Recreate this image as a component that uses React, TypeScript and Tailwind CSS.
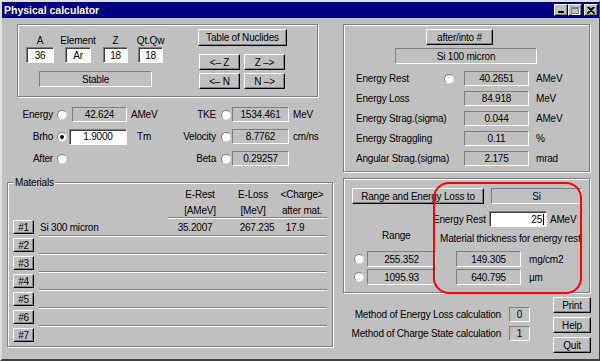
import React from 'react';

const raised =
  'flex items-center justify-center bg-[#c0c0c0] border border-t-white border-l-white border-r-black border-b-black shadow-[inset_-1px_-1px_0_#808080]';
const sunken =
  'flex items-center justify-center border border-t-[#808080] border-l-[#808080] border-r-white border-b-white';
const edit =
  'flex items-center bg-white border border-t-[#808080] border-l-[#808080] border-r-white border-b-white shadow-[inset_1px_1px_0_#404040]';
const etched = 'border border-[#808080] shadow-[inset_1px_1px_0_#fff,1px_1px_0_#fff]';

function Radio({ checked = false }: { checked?: boolean }) {
  return (
    <span className="flex w-[10px] h-[10px] shrink-0 items-center justify-center rounded-full bg-white border border-t-[#808080] border-l-[#808080] border-r-[#dfdfdf] border-b-[#dfdfdf]">
      {checked && <span className="w-[4px] h-[4px] rounded-full bg-black" />}
    </span>
  );
}

function Material({ n, last, name, rest, loss, charge }: { n: number; last?: boolean; name?: string; rest?: string; loss?: string; charge?: string }) {
  return (
    <div className="flex h-[18px]">
      <div className={`${raised} ml-[5px] w-[21px] h-[14px] shrink-0`}>#{n}</div>
      <div
        className={
          last
            ? 'ml-[5px] w-[288px] h-[16px] flex items-center'
            : 'ml-[5px] w-[288px] h-[16px] flex items-center border-b border-[#808080] shadow-[0_1px_0_#fff]'
        }
      >
        <span className="w-[136px] pl-[1px]">{name}</span>
        <span className="w-[40px] text-center">{rest}</span>
        <span className="ml-[22px] w-[40px] text-center">{loss}</span>
        <span className="w-[36px] text-center">{charge}</span>
      </div>
    </div>
  );
}

function ResultRow({ label, value, unit, radio }: { label: string; value: string; unit: string; radio?: boolean }) {
  return (
    <div className="flex items-center h-[15px]">
      <span className="ml-[12px] w-[88px] whitespace-nowrap">{label}</span>
      <span className="w-[10px]">{radio && <Radio />}</span>
      <div className={`${sunken} ml-[10px] w-[65px] h-[15px]`}>{value}</div>
      <span className="ml-[7px]">{unit}</span>
    </div>
  );
}

export default function App() {
  return (
    <div className="w-[600px] h-[361px] bg-[#c0c0c0] flex flex-col text-black text-[10px] tracking-[-0.2px] leading-[13px] font-['Liberation_Sans',Arial,sans-serif] border-t-2 border-l-2 border-r border-b-2 border-t-[#dfdfdf] border-l-[#dfdfdf] border-r-[#404040] border-b-[#404040] overflow-hidden">
      {/* title bar */}
      <div className="h-[16px] shrink-0 bg-[#000080] flex items-center justify-between pl-[2px] pr-[1px]">
        <span className="text-white font-bold text-[10.5px] tracking-[0px]">Physical calculator</span>
        <div className="flex items-center">
          <div className={`${raised} w-[14px] h-[12px] items-end justify-start pl-[3px] pb-[2px]`}>
            <span className="w-[6px] h-[2px] bg-black" />
          </div>
          <div className={`${raised} w-[14px] h-[12px]`}>
            <span className="w-[8px] h-[7px] border border-[#808080] border-t-2 shadow-[1px_1px_0_#fff]" />
          </div>
          <div className={`${raised} ml-[2px] w-[14px] h-[12px]`}>
            <svg width="8" height="7" viewBox="0 0 8 7">
              <path d="M0.5 0 L7.5 7 M7.5 0 L0.5 7 M1.5 0 L8 6.5 M6.5 0 L0 6.5" stroke="#000" strokeWidth="1.2" />
            </svg>
          </div>
        </div>
      </div>

      <div className="flex flex-1">
        {/* left column */}
        <div className="w-[336px] shrink-0 flex flex-col">
          <div className={`${etched} mt-[6px] ml-[15px] w-[301px] h-[73px] flex`}>
            <div className="w-[180px] pl-[8px] pt-[9px] flex flex-col">
              <div className="flex">
                <div className="w-[28px] flex flex-col items-center">
                  <span className="whitespace-nowrap">A</span>
                  <div className={`${edit} w-[28px] h-[16px] justify-center`}>36</div>
                </div>
                <div className="ml-[11px] w-[26px] flex flex-col items-center">
                  <span className="whitespace-nowrap">Element</span>
                  <div className={`${edit} w-[26px] h-[16px] justify-center`}>Ar</div>
                </div>
                <div className="ml-[12px] w-[25px] flex flex-col items-center">
                  <span className="whitespace-nowrap">Z</span>
                  <div className={`${edit} w-[25px] h-[16px] justify-center`}>18</div>
                </div>
                <div className="ml-[10px] w-[25px] flex flex-col items-center">
                  <span className="whitespace-nowrap">Qt.Qw</span>
                  <div className={`${edit} w-[25px] h-[16px] justify-center`}>18</div>
                </div>
              </div>
              <div className={`${sunken} mt-[8px] ml-[13px] w-[113px] h-[16px]`}>Stable</div>
            </div>
            <div className="pt-[4px] flex flex-col">
              <div className={`${raised} w-[89px] h-[17px]`}>Table of Nuclides</div>
              <div className="mt-[8px] ml-[1px] flex gap-[4px]">
                <div className={`${raised} w-[41px] h-[16px]`}>&lt;– Z</div>
                <div className={`${raised} w-[41px] h-[16px]`}>Z –&gt;</div>
              </div>
              <div className="mt-[3px] ml-[1px] flex gap-[4px]">
                <div className={`${raised} w-[41px] h-[16px]`}>&lt;– N</div>
                <div className={`${raised} w-[41px] h-[16px]`}>N –&gt;</div>
              </div>
            </div>
          </div>

          {/* energy rows */}
          <div className="h-[85px] pt-[10px] flex flex-col gap-[7px]">
            <div className="flex items-center h-[15px]">
              <div className="w-[178px] flex items-center">
                <span className="w-[51px] text-right">Energy</span>
                <span className="ml-[4px]"><Radio /></span>
                <div className={`${sunken} ml-[5px] w-[55px] h-[15px]`}>42.624</div>
                <span className="ml-[4px]">AMeV</span>
              </div>
              <span className="w-[36px] text-right">TKE</span>
              <span className="ml-[5px]"><Radio /></span>
              <div className={`${sunken} ml-[1px] w-[57px] h-[15px]`}>1534.461</div>
              <span className="ml-[4px]">MeV</span>
            </div>
            <div className="flex items-center h-[15px]">
              <div className="w-[178px] flex items-center">
                <span className="w-[51px] text-right">Brho</span>
                <span className="ml-[4px]"><Radio checked /></span>
                <div className={`${edit} ml-[2px] w-[58px] h-[16px] justify-center`}>1.9000</div>
                <span className="ml-[10px]">Tm</span>
              </div>
              <span className="w-[36px] text-right">Velocity</span>
              <span className="ml-[5px]"><Radio /></span>
              <div className={`${sunken} ml-[1px] w-[57px] h-[15px]`}>8.7762</div>
              <span className="ml-[4px]">cm/ns</span>
            </div>
            <div className="flex items-center h-[15px]">
              <div className="w-[178px] flex items-center">
                <span className="w-[51px] text-right">After</span>
                <span className="ml-[4px]"><Radio /></span>
              </div>
              <span className="w-[36px] text-right">Beta</span>
              <span className="ml-[5px]"><Radio /></span>
              <div className={`${sunken} ml-[1px] w-[57px] h-[15px]`}>0.29257</div>
            </div>
          </div>

          {/* materials */}
          <div className={`${etched} relative ml-[5px] w-[326px] h-[165px] flex flex-col`}>
            <span className="absolute -top-[7px] left-[6px] bg-[#c0c0c0] px-[1px]">Materials</span>
            <div className="pt-[5px] ml-[168px] flex">
              <div className="w-[48px] flex flex-col items-center">
                <span>E-Rest</span>
                <span className="mt-[3px]">[AMeV]</span>
              </div>
              <div className="ml-[5px] w-[48px] flex flex-col items-center">
                <span>E-Loss</span>
                <span className="mt-[3px]">[MeV]</span>
              </div>
              <div className="w-[50px] flex flex-col items-center">
                <span>&lt;Charge&gt;</span>
                <span className="mt-[3px]">after mat.</span>
              </div>
            </div>
            <div className="ml-[160px] w-[159px] border-t border-[#808080] shadow-[0_1px_0_#fff]" />
            <div className="mt-[2px] flex flex-col">
              <Material n={1} name="Si 300 micron" rest="35.2007" loss="267.235" charge="17.9" />
              <Material n={2} />
              <Material n={3} />
              <Material n={4} />
              <Material n={5} />
              <Material n={6} />
              <Material n={7} last />
            </div>
          </div>
        </div>

        {/* right column */}
        <div className="pl-[5px] flex flex-col">
          <div className={`${etched} mt-[6px] w-[247px] h-[148px] flex flex-col`}>
            <div className={`${raised} mt-[4px] ml-[82px] w-[67px] h-[16px]`}>after/into #</div>
            <div className={`${sunken} mt-[3px] ml-[51px] w-[142px] h-[16px]`}>Si 100 micron</div>
            <div className="mt-[7px] flex flex-col gap-[5px]">
              <ResultRow label="Energy Rest" value="40.2651" unit="AMeV" radio />
              <ResultRow label="Energy Loss" value="84.918" unit="MeV" />
              <ResultRow label="Energy Strag.(sigma)" value="0.044" unit="AMeV" />
              <ResultRow label="Energy Straggling" value="0.11" unit="%" />
              <ResultRow label="Angular Strag.(sigma)" value="2.175" unit="mrad" />
            </div>
          </div>

          <div className={`${etched} relative mt-[6px] w-[247px] h-[115px] flex flex-col`}>
            <div className="mt-[9px] flex">
              <div className={`${raised} ml-[8px] w-[132px] h-[16px]`}>Range and Energy Loss to</div>
              <div className={`${sunken} ml-[7px] w-[91px] h-[16px]`}>Si</div>
            </div>
            <div className="mt-[7px] flex items-center h-[16px]">
              <span className="ml-[89px] w-[56px] whitespace-nowrap">Energy Rest</span>
              <div className={`${edit} w-[58px] h-[16px] justify-end pr-[2px]`}>
                25<span className="ml-[1px] w-[1px] h-[11px] bg-black" />
              </div>
              <span className="ml-[3px]">AMeV</span>
            </div>
            <div className="mt-[2px] flex items-start h-[16px]">
              <span className="ml-[38px] w-[58px]">Range</span>
              <span className="mt-[3px] whitespace-nowrap">Material thickness for energy rest</span>
            </div>
            <div className="mt-[6px] flex items-center h-[16px]">
              <span className="ml-[10px]"><Radio /></span>
              <div className={`${sunken} ml-[3px] w-[69px] h-[16px]`}>255.352</div>
              <div className={`${sunken} ml-[20px] w-[65px] h-[16px]`}>149.305</div>
              <span className="ml-[8px]">mg/cm2</span>
            </div>
            <div className="mt-[2px] flex items-center h-[16px]">
              <span className="ml-[10px]"><Radio /></span>
              <div className={`${sunken} ml-[3px] w-[69px] h-[16px]`}>1095.93</div>
              <div className={`${sunken} ml-[20px] w-[65px] h-[16px]`}>640.795</div>
              <span className="ml-[8px]">µm</span>
            </div>
            <div className="absolute left-[89px] top-[3px] w-[149px] h-[112px] border-2 border-[#ff0000] rounded-[16px] pointer-events-none" />
          </div>

          <div className="flex">
            <div className="w-[187px] pt-[14px] flex flex-col items-end gap-[4px]">
              <div className="flex items-center">
                <span className="whitespace-nowrap">Method of Energy Loss calculation</span>
                <div className={`${sunken} ml-[8px] w-[21px] h-[15px]`}>0</div>
              </div>
              <div className="flex items-center">
                <span className="whitespace-nowrap">Method of Charge State calculation</span>
                <div className={`${sunken} ml-[8px] w-[21px] h-[15px]`}>1</div>
              </div>
            </div>
            <div className="ml-[23px] pt-[4px] flex flex-col gap-[4px]">
              <div className={`${raised} w-[38px] h-[16px]`}>Print</div>
              <div className={`${raised} w-[38px] h-[16px]`}>Help</div>
              <div className={`${raised} w-[38px] h-[16px]`}>Quit</div>
            </div>
          </div>
        </div>
      </div>
    </div>
  );
}
